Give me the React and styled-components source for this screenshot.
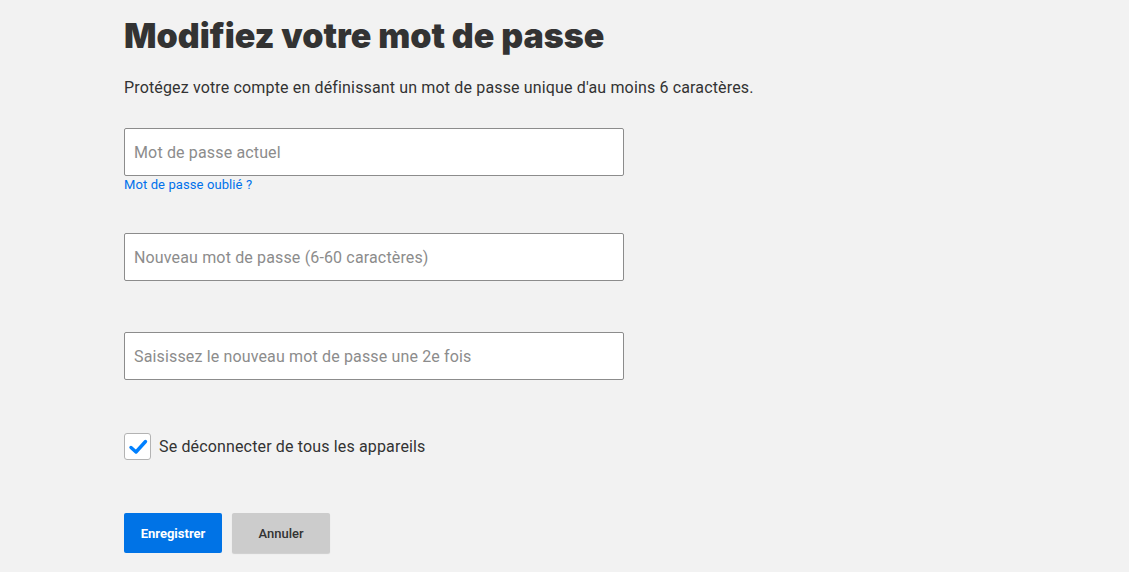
import React from "react";
import styled, { createGlobalStyle } from "styled-components";

const Global = createGlobalStyle`
  html, body { margin: 0; padding: 0; background: #f2f2f2; }
  body { font-family: Roboto, "Liberation Sans", sans-serif; color: #333; }
`;

const Page = styled.main`
  width: 1129px;
  height: 572px;
  box-sizing: border-box;
  padding: 14px 0 0 124px;
  overflow: hidden;
`;

const Title = styled.h1`
  margin: 0;
  font-family: Inter, "Liberation Sans", sans-serif;
  font-weight: 900;
  font-size: 34px;
  line-height: 44px;
  color: #333;
`;

const Lead = styled.p`
  margin: 20px 0 0;
  font-size: 16px;
  line-height: 20px;
  letter-spacing: 0.15px;
  color: #333;
`;

const Form = styled.form`
  display: flex;
  flex-direction: column;
  margin-top: 30px;
  width: 500px;
`;

const Field = styled.div`
  display: flex;
  flex-direction: column;
  margin-bottom: ${(p) => p.$gap}px;
`;

const Input = styled.input`
  box-sizing: border-box;
  width: 500px;
  height: 48px;
  padding: 0 9px;
  border: 1px solid #8c8c8c;
  border-radius: 2px;
  background: #fff;
  font-family: Roboto, "Liberation Sans", sans-serif;
  font-size: 16px;
  letter-spacing: 0.15px;
  color: #333;
  outline: none;
  &::placeholder { color: #8c8c8c; }
`;

const Link = styled.a`
  margin-top: 1px;
  font-size: 13px;
  line-height: 16px;
  letter-spacing: 0.1px;
  color: #0071eb;
  text-decoration: none;
`;

const CheckRow = styled.label`
  display: flex;
  align-items: center;
  gap: 8px;
  font-size: 16px;
  letter-spacing: 0.15px;
  color: #333;
  margin-top: 6px;
`;

const Box = styled.span`
  box-sizing: border-box;
  width: 27px;
  height: 27px;
  border: 1px solid #b3b3b3;
  border-radius: 3px;
  background: #fff;
  display: flex;
  align-items: center;
  justify-content: center;
`;

const Actions = styled.div`
  display: flex;
  gap: 10px;
  margin-top: 53px;
`;

const Button = styled.button`
  width: 98px;
  height: 40px;
  border: none;
  border-radius: 2px;
  font-family: Roboto, "Liberation Sans", sans-serif;
  font-weight: ${(p) => (p.$primary ? 700 : 500)};
  font-size: 13px;
  cursor: pointer;
  background: ${(p) => (p.$primary ? "#0073e6" : "#ccc")};
  color: ${(p) => (p.$primary ? "#fff" : "#333")};
  box-shadow: ${(p) => (p.$primary ? "none" : "0 1px 1px rgba(0,0,0,0.15)")};
`;

export default function App() {
  return (
    <Page>
      <Global />
      <Title>Modifiez votre mot de passe</Title>
      <Lead>Protégez votre compte en définissant un mot de passe unique d'au moins 6 caractères.</Lead>
      <Form onSubmit={(e) => e.preventDefault()}>
        <Field $gap={40}>
          <Input type="password" placeholder="Mot de passe actuel" />
          <Link href="#">Mot de passe oublié ?</Link>
        </Field>
        <Field $gap={51}>
          <Input type="password" placeholder="Nouveau mot de passe (6-60 caractères)" />
        </Field>
        <Field $gap={47}>
          <Input type="password" placeholder="Saisissez le nouveau mot de passe une 2e fois" />
        </Field>
        <CheckRow>
          <Box>
            <svg width="20" height="20" viewBox="0 0 20 20" aria-hidden="true">
              <path d="M3 10.5 L8 15 L17.5 4.5" fill="none" stroke="#0080ff" strokeWidth="3.4" strokeLinecap="round" strokeLinejoin="round" />
            </svg>
          </Box>
          Se déconnecter de tous les appareils
        </CheckRow>
        <Actions>
          <Button $primary type="submit">Enregistrer</Button>
          <Button type="button">Annuler</Button>
        </Actions>
      </Form>
    </Page>
  );
}
